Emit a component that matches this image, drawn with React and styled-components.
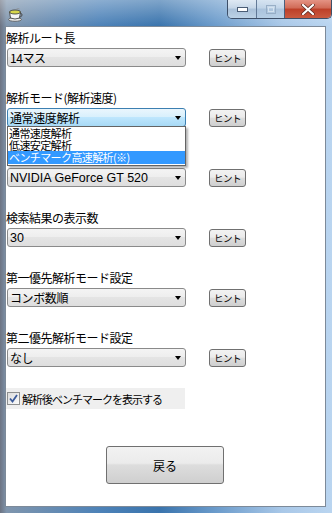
import React from "react";
import styled, { createGlobalStyle } from "styled-components";

const GlobalStyle = createGlobalStyle`
  html, body {
    margin: 0;
    padding: 0;
  }
  body {
    width: 332px;
    height: 513px;
    overflow: hidden;
    font-family: "Noto Sans CJK JP", "Liberation Sans", sans-serif;
    color: #000;
  }
`;

const Window = styled.div`
  width: 332px;
  height: 513px;
  box-sizing: border-box;
  display: flex;
  flex-direction: column;
  padding: 0 6px 6px 5px;
  background:
    linear-gradient(to bottom, rgba(255, 255, 255, 0.35), rgba(255, 255, 255, 0) 26px),
    linear-gradient(to right, #6c7382 0, #7f95ad 2%, #4d82b8 30%, #3a74ad 48%, #6b9bcb 65%, #a9c8e8 85%, #bad5f0 100%);
`;

const TitleBar = styled.div`
  height: 26px;
  flex-shrink: 0;
  display: flex;
  justify-content: space-between;
  align-items: flex-start;
`;

const AppIcon = styled.div`
  margin: 3px 0 0 2px;
  width: 16px;
  height: 16px;
`;

const Caption = styled.div`
  display: flex;
  margin-right: -6px;
  height: 18px;
  border: 1px solid #3d4f68;
  border-top: none;
  border-radius: 0 0 5px 5px;
  overflow: hidden;
`;

const CaptionButton = styled.div`
  width: ${(p) => p.w}px;
  height: 18px;
  display: flex;
  align-items: center;
  justify-content: center;
  border-left: ${(p) => (p.first ? "none" : "1px solid #4a5f7c")};
  background: ${(p) =>
    p.close
      ? "linear-gradient(to bottom, #e49384 0%, #d06a56 45%, #bd3f28 50%, #c95a40 100%)"
      : "linear-gradient(to bottom, #dfe9f3 0%, #c5d6e7 45%, #a9c0d8 50%, #bcd2e6 100%)"};
  opacity: ${(p) => (p.disabled ? 0.75 : 1)};
`;

const Client = styled.div`
  flex: 1;
  background: #fff;
  border: 1px solid #7d8a99;
  position: relative;
  padding-top: 1px;
`;

const Field = styled.div`
  margin-bottom: 21px;
`;

const Label = styled.div`
  height: 20px;
  line-height: 20px;
  font-size: 12px;
  letter-spacing: -0.5px;
  white-space: nowrap;
`;

const Row = styled.div`
  position: relative;
  display: flex;
  align-items: center;
  gap: 23px;
  padding-left: 1px;
`;

const Combo = styled.div`
  width: 179px;
  height: 19px;
  box-sizing: border-box;
  border: 1px solid ${(p) => (p.focused ? "#3c7fb1" : "#8a8a8a")};
  border-radius: 3px;
  background: ${(p) =>
    p.focused
      ? "linear-gradient(to bottom, #eaf6fd 0%, #d9f0fc 45%, #bee6fd 50%, #a7d9f5 100%)"
      : "linear-gradient(to bottom, #f4f4f4 0%, #eeeeee 45%, #e4e4e4 50%, #dedede 100%)"};
  display: flex;
  align-items: center;
  justify-content: space-between;
  padding: 0 4px 0 2px;
  font-size: ${(p) => (p.latin ? "12.5px" : "12px")};
  letter-spacing: ${(p) => (p.latin ? "0" : "-0.4px")};
  font-family: ${(p) =>
    p.latin ? '"Liberation Sans", "Noto Sans CJK JP", sans-serif' : '"Noto Sans CJK JP", sans-serif'};
  white-space: nowrap;
`;

const Arrow = styled.div`
  width: 0;
  height: 0;
  border-left: 3.5px solid transparent;
  border-right: 3.5px solid transparent;
  border-top: 4px solid #000;
`;

const HintButton = styled.div`
  width: 37px;
  height: 18px;
  box-sizing: border-box;
  border: 1px solid #707070;
  border-radius: 3px;
  background: linear-gradient(to bottom, #f2f2f2 0%, #ebebeb 45%, #dddddd 50%, #cfcfcf 100%);
  display: flex;
  align-items: center;
  justify-content: center;
  font-size: 9.5px;
  letter-spacing: -0.5px;
`;

const DropList = styled.div`
  position: absolute;
  left: 1px;
  top: 18px;
  width: 179px;
  box-sizing: border-box;
  border: 1px solid #646464;
  background: #fff;
  padding-bottom: 1px;
  box-shadow: 2px 2px 2px rgba(0, 0, 0, 0.3);
  z-index: 2;
`;

const DropItem = styled.div`
  height: ${(p) => (p.last ? 13 : 12)}px;
  line-height: 12px;
  font-size: 11px;
  letter-spacing: -0.6px;
  padding-left: 1px;
  white-space: nowrap;
  background: ${(p) => (p.selected ? "#3399ff" : "transparent")};
  color: ${(p) => (p.selected ? "#fff" : "#000")};
`;

const CheckRow = styled.div`
  margin-top: 3px;
  width: 179px;
  height: 21px;
  background: #efefef;
  display: flex;
  align-items: center;
  gap: 2px;
  padding-left: 1px;
  box-sizing: border-box;
  font-size: 11px;
  letter-spacing: -1px;
  white-space: nowrap;
`;

const CheckBox = styled.div`
  width: 13px;
  height: 13px;
  box-sizing: border-box;
  border: 1px solid #8e8f8f;
  background: linear-gradient(135deg, #dcdcdc, #fbfbfb);
  display: flex;
  align-items: center;
  justify-content: center;
`;

const Footer = styled.div`
  display: flex;
  justify-content: center;
  margin-top: 37px;
  padding-right: 1px;
`;

const BackButton = styled.div`
  width: 118px;
  height: 38px;
  box-sizing: border-box;
  border: 1px solid #707070;
  border-radius: 3px;
  background: linear-gradient(to bottom, #f2f2f2 0%, #ebebeb 45%, #dddddd 50%, #cfcfcf 100%);
  display: flex;
  align-items: center;
  justify-content: center;
  font-size: 12px;
`;

const TeaCup = () => (
  <svg width="16" height="16" viewBox="0 0 16 16">
    <ellipse cx="8" cy="13.5" rx="6.5" ry="1.8" fill="#e8e8e8" stroke="#555" strokeWidth="0.8" />
    <path d="M2.5 6 L3.5 12 Q8 14 12.5 12 L13.5 6 Z" fill="#f5f5f5" stroke="#444" strokeWidth="0.9" />
    <path d="M13.2 7.2 Q16 7.5 14.8 10 Q14 11 12.6 10.8" fill="none" stroke="#444" strokeWidth="0.9" />
    <ellipse cx="8" cy="6" rx="5.5" ry="2" fill="#d7d64a" stroke="#444" strokeWidth="0.9" />
    <path d="M9 3.5 Q11 2 12.5 3" fill="none" stroke="#888" strokeWidth="0.7" />
  </svg>
);

const fields = [
  { label: "解析ルート長", value: "14マス" },
  { label: "解析モード(解析速度)", value: "通常速度解析", focused: true, open: true },
  { label: "\u00a0", value: "NVIDIA GeForce GT 520", latin: true },
  { label: "検索結果の表示数", value: "30", latin: true },
  { label: "第一優先解析モード設定", value: "コンボ数順" },
  { label: "第二優先解析モード設定", value: "なし" },
];

const modes = ["通常速度解析", "低速安定解析", "ベンチマーク高速解析(※)"];

const App = () => {
  return (
    <>
      <GlobalStyle />
      <Window>
        <TitleBar>
          <AppIcon>
            <TeaCup />
          </AppIcon>
          <Caption>
            <CaptionButton w={28} first>
              <svg width="11" height="5" viewBox="0 0 11 5">
                <rect x="0.5" y="0.5" width="10" height="4" fill="#fff" stroke="#4a5d75" strokeWidth="1" />
              </svg>
            </CaptionButton>
            <CaptionButton w={27} disabled>
              <svg width="10" height="9" viewBox="0 0 10 9">
                <rect x="0.5" y="0.5" width="9" height="8" fill="none" stroke="#8ea3ba" strokeWidth="1" />
                <rect x="2.5" y="2.5" width="5" height="4" fill="none" stroke="#dfe8f1" strokeWidth="1" />
              </svg>
            </CaptionButton>
            <CaptionButton w={46} close>
              <svg width="14" height="11" viewBox="0 0 14 11">
                <path d="M2 1 L12 10 M12 1 L2 10" stroke="#5a2a22" strokeWidth="3.6" strokeLinecap="round" />
                <path d="M2 1 L12 10 M12 1 L2 10" stroke="#fff" strokeWidth="2.2" strokeLinecap="round" />
              </svg>
            </CaptionButton>
          </Caption>
        </TitleBar>
        <Client>
          {fields.map((f, i) => (
            <Field key={i}>
              <Label>{f.label}</Label>
              <Row>
                <Combo focused={f.focused} latin={f.latin}>
                  <span>{f.value}</span>
                  <Arrow />
                </Combo>
                <HintButton>ヒント</HintButton>
                {f.open && (
                  <DropList>
                    {modes.map((m, j) => (
                      <DropItem key={m} selected={j === 2} last={j === 2}>
                        {m}
                      </DropItem>
                    ))}
                  </DropList>
                )}
              </Row>
            </Field>
          ))}
          <CheckRow>
            <CheckBox>
              <svg width="9" height="9" viewBox="0 0 9 9">
                <path d="M1 4.5 L3.5 7.5 L8 1" fill="none" stroke="#3b5a9a" strokeWidth="1.8" />
              </svg>
            </CheckBox>
            <span>解析後ベンチマークを表示する</span>
          </CheckRow>
          <Footer>
            <BackButton>戻る</BackButton>
          </Footer>
        </Client>
      </Window>
    </>
  );
};

export default App;
